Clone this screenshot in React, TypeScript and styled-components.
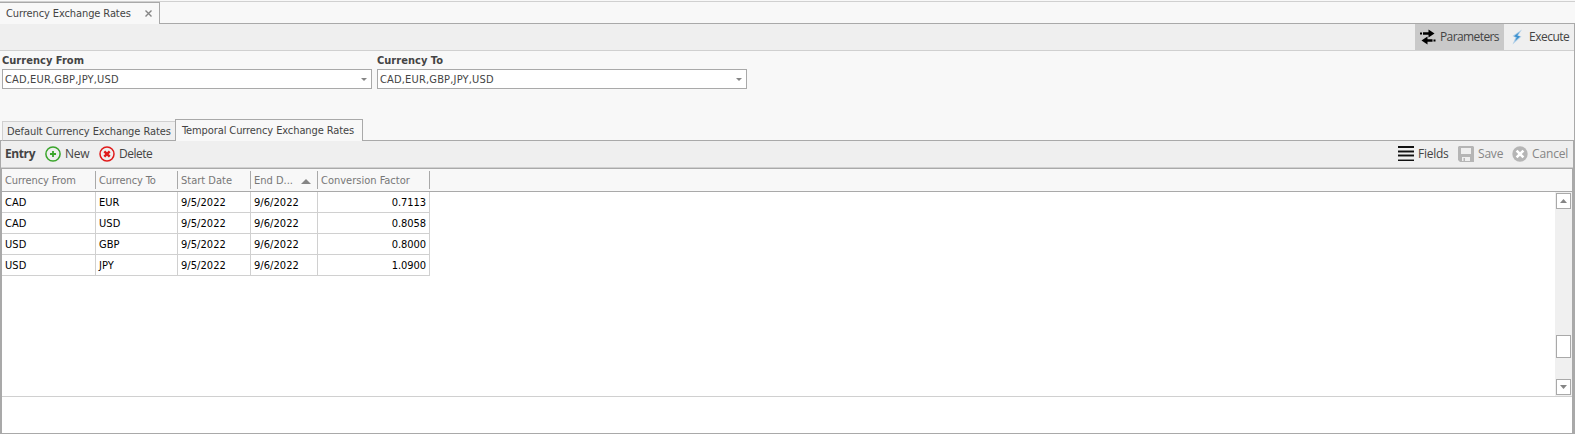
import React from 'react';
import styled, { createGlobalStyle, css } from 'styled-components';

const Global = createGlobalStyle`
  * { box-sizing: border-box; }
  body { margin: 0; background: #f8f8f8; overflow: hidden; }
`;

const line = '#a9a9a9';
const soft = '#d0d0d0';

const Page = styled.div`
  width: 1575px;
  height: 434px;
  display: flex;
  flex-direction: column;
  background: #f8f8f8;
  color: #444;
  font: 11px/14px 'DejaVu Sans Condensed', 'DejaVu Sans', sans-serif;
  font-stretch: condensed;
`;

const Label = styled.span<{ $ls?: number }>`
  white-space: nowrap;
  letter-spacing: ${p => p.$ls ?? 0}px;
`;

const TopEdge = styled.div`
  height: 2px;
  flex: none;
  border-bottom: 1px solid ${soft};
`;

const DocTabs = styled.div`
  height: 22px;
  flex: none;
  display: flex;
`;

const DocTab = styled.div`
  width: 160px;
  display: flex;
  align-items: center;
  justify-content: space-between;
  padding: 0 7px 0 6px;
  border: solid ${line};
  border-width: 1px 1px 0 0;
`;

const TabFiller = styled.div`
  flex: 1;
  border-bottom: 1px solid ${line};
`;

const Body = styled.div`
  flex: 1;
  min-height: 0;
  display: flex;
  flex-direction: column;
`;

const Upper = styled.div`
  height: 95px;
  flex: none;
  border-right: 1px solid ${line};
`;

const MainBar = styled.div`
  height: 27px;
  display: flex;
  justify-content: flex-end;
  background: #efefef;
  border-bottom: 1px solid ${soft};
`;

const segoe = css`
  font-family: 'Open Sans', 'Noto Sans', sans-serif;
  font-size: 12px;
  font-stretch: normal;
`;

const MainButton = styled.div<{ $on?: boolean; $w: number }>`
  ${segoe}
  width: ${p => p.$w}px;
  display: flex;
  align-items: center;
  gap: 4px;
  padding-left: 5px;
  background: ${p => (p.$on ? '#c9c9c9' : 'transparent')};
`;

const Filters = styled.div`
  display: flex;
  gap: 5px;
  padding: 2px 0 0 2px;
`;

const Filter = styled.div`
  width: 370px;
`;

const FilterTitle = styled.div`
  height: 16px;
  padding-top: 1px;
  font-weight: bold;
`;

const Combo = styled.div`
  height: 20px;
  display: flex;
  align-items: center;
  justify-content: space-between;
  padding: 1px 4px 0 2px;
  background: #fff;
  border: 1px solid ${line};
`;

const InnerTabs = styled.div`
  height: 22px;
  flex: none;
  display: flex;
  align-items: flex-end;
  border-right: 1px solid ${line};
`;

const TabEdge = styled.div<{ $w?: number }>`
  ${p => (p.$w ? `width: ${p.$w}px;` : 'flex: 1;')}
  align-self: stretch;
  border-bottom: 1px solid ${line};
`;

const InnerTab = styled.div<{ $on?: boolean; $w: number }>`
  width: ${p => p.$w}px;
  height: ${p => (p.$on ? 22 : 20)}px;
  padding: ${p => (p.$on ? '4px 0 0 6px' : '3px 0 0 4px')};
  background: ${p => (p.$on ? '#f8f8f8' : '#f0f0f0')};
  border: 1px solid ${p => (p.$on ? line : soft)};
  ${p => (p.$on ? 'border-bottom: 0;' : `border-right: 0; border-bottom-color: ${line};`)}
`;

const EntryBar = styled.div`
  ${segoe}
  height: 28px;
  flex: none;
  display: flex;
  align-items: center;
  padding: 0 0 2px 4px;
  background: #efefef;
  border: solid ${line};
  border-width: 0 2px 1px 1px;
  box-shadow: inset 0 -1px ${soft};
`;

const Spacer = styled.div`
  flex: 1;
`;

const Action = styled.div<{ $w: number; $gap: number; $off?: boolean }>`
  width: ${p => p.$w}px;
  display: flex;
  align-items: center;
  gap: ${p => p.$gap}px;
  color: ${p => (p.$off ? '#858585' : '#444')};
`;

const Grid = styled.div`
  flex: 1;
  min-height: 0;
  display: flex;
  flex-direction: column;
  background: #fff;
  border: solid ${line};
  border-width: 0 3px 1px 2px;
`;

const columns = '94px 82px 73px 67px 112px';

const Head = styled.div`
  height: 23px;
  flex: none;
  display: grid;
  grid-template-columns: ${columns};
  align-items: center;
  background: #f8f8f8;
  border-bottom: 1px solid ${line};
  color: #777;
`;

const HeadCell = styled.div`
  height: 18px;
  display: flex;
  align-items: center;
  justify-content: space-between;
  padding: 2px 6px 0 3px;
  border-right: 1px solid ${line};
`;

const Scroller = styled.div`
  height: 204px;
  flex: none;
  display: flex;
  justify-content: space-between;
`;

const Row = styled.div`
  height: 21px;
  display: grid;
  grid-template-columns: ${columns};
  color: #000;
`;

const Cell = styled.div<{ $right?: boolean }>`
  padding: 4px 3px 0;
  text-align: ${p => (p.$right ? 'right' : 'left')};
  border: solid ${soft};
  border-width: 0 1px 1px 0;
`;

const Track = styled.div`
  width: 17px;
  display: flex;
  flex-direction: column;
  align-items: center;
  padding: 1px 0;
  background: #f0f0f0;
`;

const TrackBox = styled.div<{ $h: number }>`
  width: 15px;
  height: ${p => p.$h}px;
  display: flex;
  align-items: center;
  justify-content: center;
  background: #fff;
  border: 1px solid ${line};
`;

const Gap = styled.div<{ $h: number }>`
  height: ${p => p.$h}px;
`;

const Footer = styled.div`
  flex: 1;
  border-top: 1px solid ${soft};
`;

const Triangle = ({ w, h, up }: { w: number; h: number; up?: boolean }) => (
  <svg width={w} height={h}>
    <path fill="#858585" d={up ? `M0 ${h}H${w}L${w / 2} 0Z` : `M0 0H${w}L${w / 2} ${h}Z`} />
  </svg>
);

const SwapIcon = () => (
  <svg width="16" height="16" viewBox="0 0 16 16" fill="#000">
    <path d="M0 3.500h2v2H0zM3 3.300h5.500V0.500L14.500 4.500 8.500 8.500V5.800H3zM13.500 10.500h2v2h-2zM12.500 12.800H7.500V15.500L1.500 11.500 7.500 7.500V10.300h5z" />
  </svg>
);

const BoltIcon = () => (
  <svg width="16" height="16" viewBox="0 0 16 16">
    <path fill="#a9cbe6" d="M13 0.500L3.500 7 6.500 8.500 3.500 15.500 12.500 7.500 9 6.500Z" />
    <path fill="#3d92cf" d="M10.500 3L5 7.200 7.800 8.300 6 12 11.200 7.500 8.200 6.600Z" />
  </svg>
);

const AddIcon = () => (
  <svg width="16" height="16" viewBox="0 0 16 16" fill="none" stroke="#3aa52b">
    <circle cx="8" cy="8" r="7.100" strokeWidth="1.500" />
    <path strokeWidth="1.800" d="M8 5v6M5 8h6" />
  </svg>
);

const RemoveIcon = () => (
  <svg width="16" height="16" viewBox="0 0 16 16" fill="none" stroke="#e01b1b">
    <circle cx="8" cy="8" r="7" strokeWidth="1.500" />
    <path strokeWidth="2.400" d="M5.300 5.300l5.400 5.400M10.700 5.300l-5.400 5.400" />
  </svg>
);

const FieldsIcon = () => (
  <svg width="16" height="16" viewBox="0 0 16 16" shapeRendering="crispEdges">
    <path fill="#111" d="M0 0h16v2H0zM0 5h16v1H0zM0 9h16v1H0zM0 14h16v1H0z" />
    <path fill="#888" d="M0 4h16v1H0zM0 6h16v1H0zM0 8h16v1H0zM0 10h16v1H0zM0 13h16v1H0z" />
  </svg>
);

const SaveIcon = () => (
  <svg width="16" height="16" viewBox="0 0 16 16">
    <path fill="#b5b5b5" fillRule="evenodd" d="M1 0H15L16 1V16H2L0 14V1ZM3 2V8H13V2ZM4 11V15H5.500V12H7V15H12V11Z" />
  </svg>
);

const CancelIcon = () => (
  <svg width="16" height="16" viewBox="0 0 16 16">
    <circle cx="8" cy="8" r="7.700" fill="#b5b5b5" />
    <path stroke="#fff" strokeWidth="2.600" d="M4.600 4.600l6.800 6.800M11.400 4.600l-6.800 6.800" />
  </svg>
);

const CloseIcon = () => (
  <svg width="7" height="7" viewBox="0 0 7 7">
    <path stroke="#858585" strokeWidth="1.400" d="M0.500 0.500l6 6M6.500 0.500l-6 6" />
  </svg>
);

const rates = [
  ['CAD', 'EUR', '9/5/2022', '9/6/2022', '0.7113'],
  ['CAD', 'USD', '9/5/2022', '9/6/2022', '0.8058'],
  ['USD', 'GBP', '9/5/2022', '9/6/2022', '0.8000'],
  ['USD', 'JPY', '9/5/2022', '9/6/2022', '1.0900'],
];

export default function App() {
  return (
    <Page>
      <Global />
      <TopEdge />
      <DocTabs>
        <DocTab>
          <Label $ls={-0.1}>Currency Exchange Rates</Label>
          <CloseIcon />
        </DocTab>
        <TabFiller />
      </DocTabs>
      <Body>
        <Upper>
          <MainBar>
            <MainButton $on $w={89}><SwapIcon /><Label $ls={-0.6}>Parameters</Label></MainButton>
            <MainButton $w={70}><BoltIcon /><Label $ls={-0.5}>Execute</Label></MainButton>
          </MainBar>
          <Filters>
            {['Currency From', 'Currency To'].map(title => (
              <Filter key={title}>
                <FilterTitle><Label $ls={0.03}>{title}</Label></FilterTitle>
                <Combo>
                  <Label $ls={0.17}>CAD,EUR,GBP,JPY,USD</Label>
                  <Triangle w={6} h={3} />
                </Combo>
              </Filter>
            ))}
          </Filters>
        </Upper>
        <InnerTabs>
          <TabEdge $w={2} />
          <InnerTab $w={173}><Label $ls={-0.08}>Default Currency Exchange Rates</Label></InnerTab>
          <InnerTab $on $w={188}><Label $ls={-0.1}>Temporal Currency Exchange Rates</Label></InnerTab>
          <TabEdge />
        </InnerTabs>
        <EntryBar>
          <Action $w={40} $gap={0}><b><Label $ls={-0.4}>Entry</Label></b></Action>
          <Action $w={54} $gap={4}><AddIcon /><Label $ls={-0.3}>New</Label></Action>
          <Action $w={60} $gap={4}><RemoveIcon /><Label $ls={-0.5}>Delete</Label></Action>
          <Spacer />
          <Action $w={60} $gap={4}><FieldsIcon /><Label $ls={-0.25}>Fields</Label></Action>
          <Action $w={54} $gap={4} $off><SaveIcon /><Label $ls={-0.2}>Save</Label></Action>
          <Action $w={61} $gap={4} $off><CancelIcon /><Label $ls={-0.15}>Cancel</Label></Action>
        </EntryBar>
        <Grid>
          <Head>
            <HeadCell><Label $ls={-0.1}>Currency From</Label></HeadCell>
            <HeadCell><Label $ls={-0.1}>Currency To</Label></HeadCell>
            <HeadCell><Label>Start Date</Label></HeadCell>
            <HeadCell><Label>End D...</Label><Triangle up w={10} h={5} /></HeadCell>
            <HeadCell><Label>Conversion Factor</Label></HeadCell>
          </Head>
          <Scroller>
            <div>
              {rates.map((row, r) => (
                <Row key={r}>
                  {row.map((value, c) => (
                    <Cell key={c} $right={c === 4}><Label $ls={c === 4 ? -0.05 : 0.05}>{value}</Label></Cell>
                  ))}
                </Row>
              ))}
            </div>
            <Track>
              <TrackBox $h={16}><Triangle up w={7} h={4} /></TrackBox>
              <Gap $h={126} />
              <TrackBox $h={23} />
              <Gap $h={21} />
              <TrackBox $h={16}><Triangle w={7} h={4} /></TrackBox>
            </Track>
          </Scroller>
          <Footer />
        </Grid>
      </Body>
    </Page>
  );
}
